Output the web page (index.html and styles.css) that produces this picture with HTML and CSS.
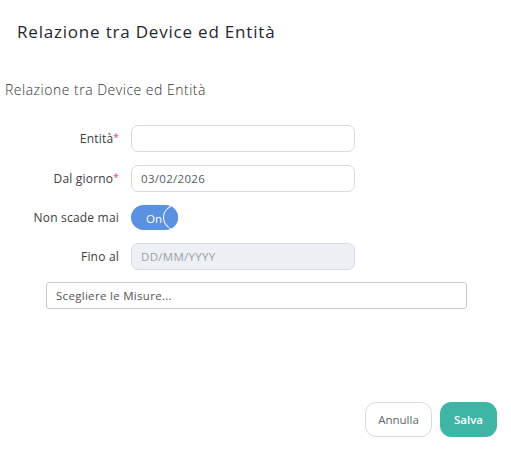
FILE: index.html
```html
<!DOCTYPE html>
<html lang="it">
<head>
<meta charset="utf-8">
<title>Relazione tra Device ed Entità</title>
<link rel="stylesheet" href="styles.css">
</head>
<body>
<div class="modal">
  <header class="modal-header">
    <h1 class="modal-title">Relazione tra Device ed Entità</h1>
  </header>
  <main class="modal-body">
    <h2 class="section-title">Relazione tra Device ed Entità</h2>
    <form class="form">
      <div class="row row-1">
        <label class="label">Entità<span class="req">*</span></label>
        <input class="input" type="text">
      </div>
      <div class="row row-2">
        <label class="label">Dal giorno<span class="req">*</span></label>
        <input class="input" type="text" value="03/02/2026">
      </div>
      <div class="row row-3">
        <label class="label">Non scade mai</label>
        <div class="toggle"><span class="knob"></span><span class="toggle-text">On</span></div>
      </div>
      <div class="row row-4">
        <label class="label">Fino al</label>
        <input class="input input-disabled" type="text" placeholder="DD/MM/YYYY" disabled>
      </div>
      <div class="select">Scegliere le Misure...</div>
    </form>
  </main>
  <footer class="modal-footer">
    <button class="btn btn-cancel" type="button">Annulla</button>
    <button class="btn btn-save" type="button">Salva</button>
  </footer>
</div>
</body>
</html>
```
FILE: styles.css
```css
* { box-sizing: border-box; }
html, body { margin: 0; padding: 0; background: #fff; }
body {
  font-family: "Open Sans", "Liberation Sans", sans-serif;
  width: 511px;
  height: 455px;
  overflow: hidden;
}
.modal { display: flex; flex-direction: column; height: 455px; }
.modal-header { padding: 21px 17px 0; height: 66px; }
.modal-title {
  margin: 0;
  font-size: 17px;
  font-weight: 500;
  letter-spacing: 0.8px;
  color: #1f2733;
  line-height: 22px;
}
.modal-body { padding: 0 0 0 5px; flex: 1; }
.section-title {
  margin: 14px 0 0;
  font-size: 14px;
  font-weight: 300;
  letter-spacing: 0.5px;
  color: #333;
  line-height: 20px;
}
.form { margin-top: 25px; }
.row { display: flex; align-items: center; }
.label {
  width: 114px;
  text-align: right;
  font-size: 12px;
  letter-spacing: 0.2px;
  color: #3d3d3d;
  margin-right: 12px;
  white-space: nowrap;
}
.req { color: #e8416b; font-size: 10px; vertical-align: top; }
.input {
  width: 224px;
  height: 27px;
  border: 1px solid #d5dce6;
  border-radius: 7px;
  padding: 0 9px;
  font: inherit;
  font-size: 11.5px;
  letter-spacing: 0.3px;
  color: #555c66;
  background: #fff;
  outline: none;
}
.input-disabled { background: #edf0f5; }
.input-disabled::placeholder { color: #9aa0a8; }
.row-1 { margin-bottom: 13px; }
.row-2 { margin-bottom: 13px; }
.row-3 { margin-bottom: 13px; }
.toggle {
  width: 47px;
  height: 25px;
  border-radius: 13px;
  background: #5b91e1;
  display: flex;
  align-items: center;
  position: relative;
  overflow: hidden;
}
.toggle-text {
  position: relative;
  color: #fff;
  font-size: 11.5px;
  margin-left: 15px;
  line-height: 1;
  margin-top: 2px;
}
.knob {
  position: absolute;
  left: 32px;
  top: 0;
  width: 25px;
  height: 25px;
  border-radius: 50%;
  border: 1px solid #fff;
  border-right-color: transparent;
  background: #5b91e1;
}
.select {
  margin: 12px 0 0 41px;
  width: 421px;
  height: 27px;
  border: 1px solid #c9c9c9;
  border-radius: 3px;
  padding: 0 9px;
  font-size: 11.5px;
  letter-spacing: 0.3px;
  color: #555;
  display: flex;
  align-items: center;
}
.modal-footer {
  display: flex;
  justify-content: flex-end;
  gap: 8px;
  padding: 0 14px 18px 0;
}
.btn {
  height: 35px;
  border-radius: 11px;
  font-family: inherit;
  font-size: 11.5px;
  cursor: pointer;
}
.btn-cancel {
  width: 67px;
  background: #fff;
  border: 1px solid #d5dce6;
  color: #5f6670;
}
.btn-save {
  width: 57px;
  background: #3fb5a5;
  border: 1px solid #3fb5a5;
  color: #fff;
  font-weight: 600;
}
```
